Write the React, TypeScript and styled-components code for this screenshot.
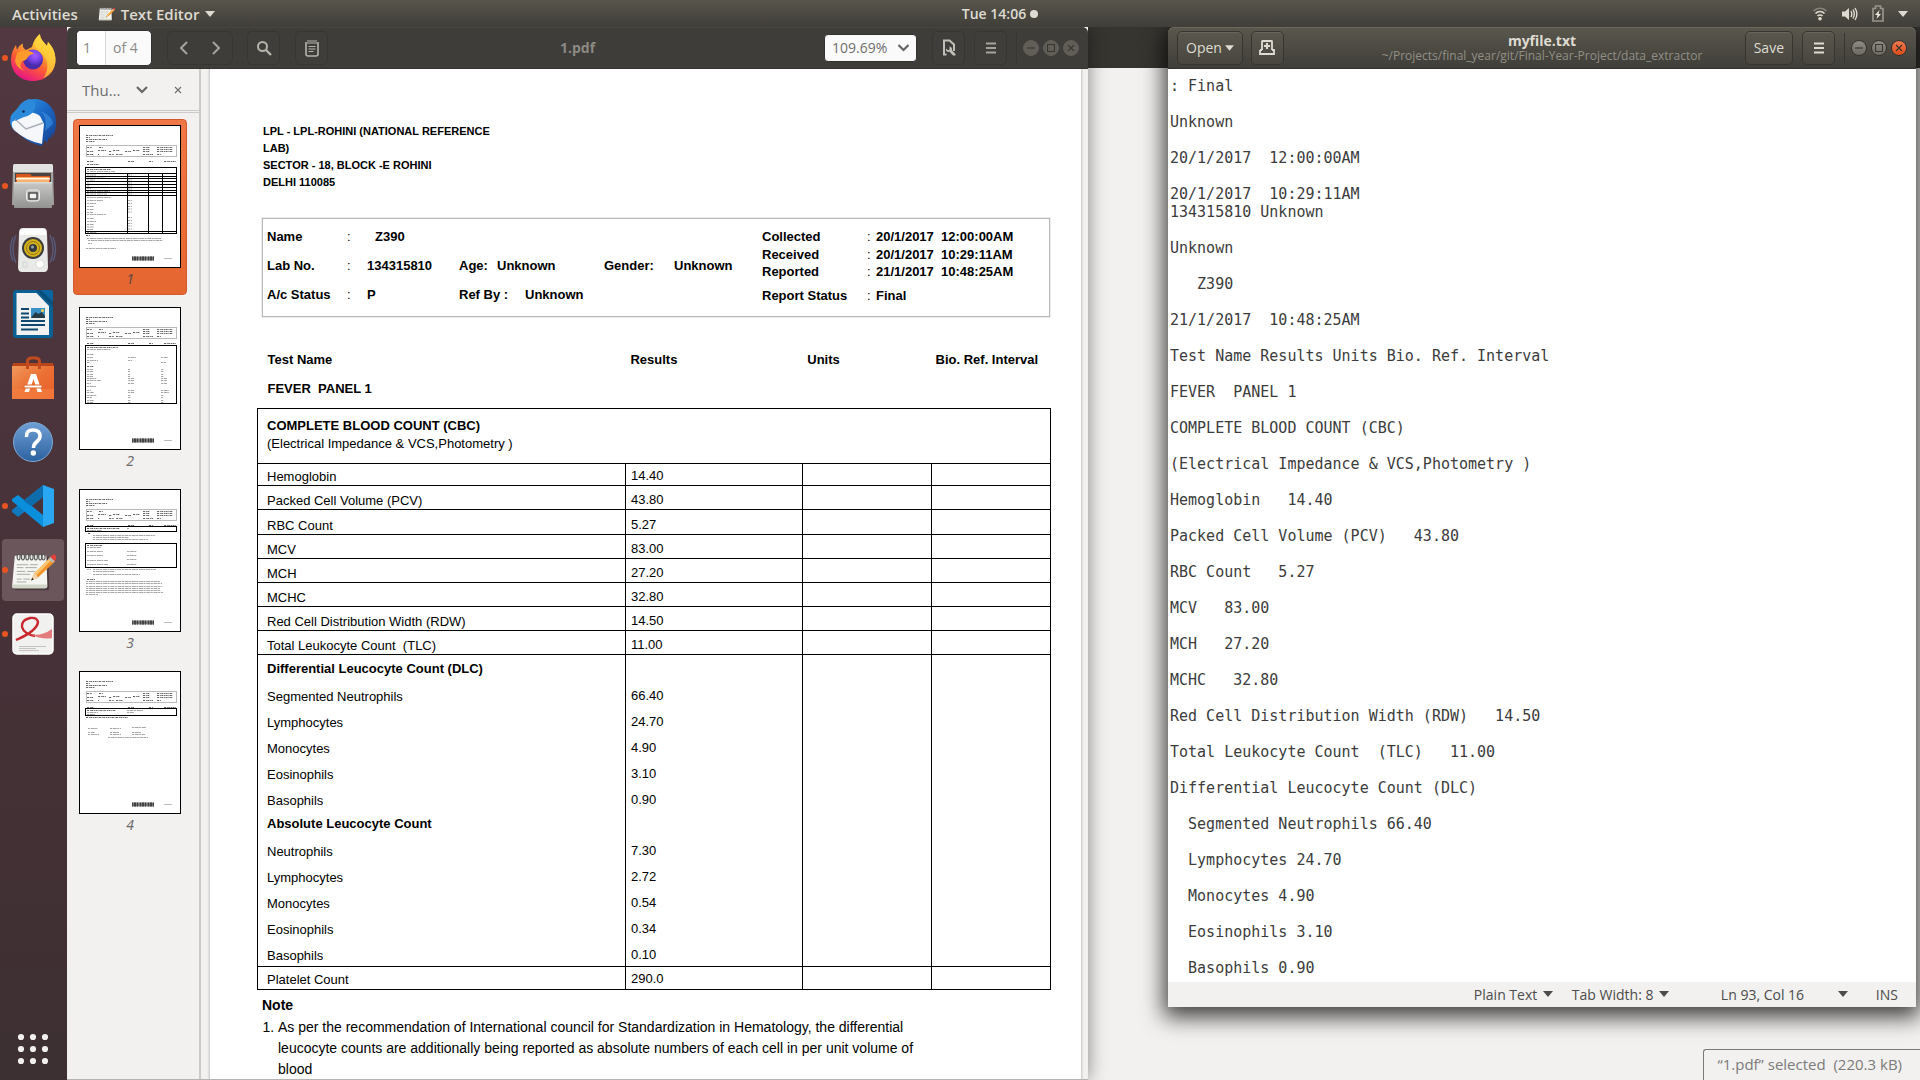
import React from "react";
import styled, { createGlobalStyle, css } from "styled-components";

const ui = `"Open Sans", "Noto Sans", sans-serif`;
const doc = `"Liberation Sans", Arial, sans-serif`;

const GlobalStyle = createGlobalStyle`
  * { box-sizing: border-box; }
  body { margin: 0; font-family: ${ui}; font-size: 14px; overflow: hidden; }
  button, input, select, textarea { font: inherit; color: inherit; margin: 0; }
  button { cursor: pointer; }
  svg { display: block; flex: none; }
`;

/* ---------- shell ---------- */

const Screen = styled.div`
  display: flex;
  flex-direction: column;
  height: 100vh;
  overflow: hidden;
  background: #f2f1ef;
`;

const TopBar = styled.header`
  display: grid;
  grid-template-columns: 1fr auto 1fr;
  align-items: center;
  height: 27px;
  flex: none;
  padding: 0 12px;
  background: linear-gradient(#58554c, #403e39);
  color: #dfdbd2;
`;

const BarGroup = styled.div<{ $end?: boolean }>`
  display: flex;
  align-items: center;
  gap: ${(p) => (p.$end ? 14 : 20)}px;
  justify-content: ${(p) => (p.$end ? "flex-end" : "flex-start")};
`;

const BarButton = styled.button`
  display: flex;
  align-items: center;
  gap: 6px;
  padding: 0;
  border: 0;
  background: none;
  font-size: 15px;
  font-weight: 600;
  line-height: 20px;
`;

const Clock = styled(BarButton)`
  padding-left: 80px;
  gap: 4px;
  font-size: 14px;
`;

const Workspace = styled.div`
  display: flex;
  flex: 1;
  min-height: 0;
`;

const Dock = styled.nav`
  display: flex;
  flex-direction: column;
  gap: 2px;
  width: 67px;
  flex: none;
  background: linear-gradient(#523840, #49333a 45%, #402f33 85%, #3c3032);
`;

const DockItem = styled.button<{ $active?: boolean; $running?: boolean }>`
  position: relative;
  display: grid;
  place-items: center;
  width: 62px;
  height: 62px;
  margin-left: 2px;
  padding: 0;
  border: 0;
  border-radius: 4px;
  background: ${(p) => (p.$active ? "#6b565c" : "none")};
  ${(p) =>
    p.$running &&
    css`
      &::before {
        content: "";
        position: absolute;
        left: 0;
        top: 28px;
        width: 6px;
        height: 6px;
        border-radius: 50%;
        background: #e95420;
      }
    `}
`;

const DockSpacer = styled.div`
  flex: 1;
`;

const Desktop = styled.main`
  position: relative;
  display: flex;
  flex: 1;
  min-width: 0;
  gap: 80px;
  padding-right: 4px;
  background: linear-gradient(#373530 0 41px, #f2f1ef 41px);
  overflow: hidden;
`;

const StatusTip = styled.div`
  position: absolute;
  right: 0;
  bottom: 0;
  height: 31px;
  padding: 4px 18px 4px 13px;
  border: solid #7a7a78;
  border-width: 1px 0 0 1px;
  border-top-left-radius: 3px;
  background: #f2f1ef;
  color: #7b7b79;
  font-size: 15px;
  line-height: 20px;
  white-space: pre;
`;

/* ---------- windows ---------- */

const PdfWindow = styled.section`
  display: flex;
  flex-direction: column;
  flex: 1021 1 0;
  min-width: 0;
  background: #f2f1f0;
  border-bottom: 1px solid #b5b4b2;
  box-shadow: 0 0 18px rgba(0, 0, 0, 0.45);
`;

const EditorWindow = styled.section`
  display: flex;
  flex-direction: column;
  flex: 748 1 0;
  min-width: 0;
  margin-bottom: 73px;
  border-radius: 6px 6px 0 0;
  box-shadow: 0 6px 22px 4px rgba(0, 0, 0, 0.75);
`;

const TitleBar = styled.div<{ $focused?: boolean }>`
  display: grid;
  grid-template-columns: 1fr auto 1fr;
  align-items: center;
  height: 42px;
  flex: none;
  padding: 0 9px;
  border-radius: 6px 6px 0 0;
  border-bottom: 1px solid #35332f;
  background: ${(p) => (p.$focused ? "linear-gradient(#5a574e, #403e39)" : "#3f3d39")};
  box-shadow: inset 0 1px ${(p) => (p.$focused ? "#6a675d" : "#474540")};
  color: ${(p) => (p.$focused ? "#dfdbd2" : "#a5a39b")};
`;

const Tools = styled.div<{ $end?: boolean }>`
  display: flex;
  align-items: center;
  justify-content: ${(p) => (p.$end ? "flex-end" : "flex-start")};
`;

const Title = styled.h1`
  margin: 0;
  color: #8b8981;
  font-size: 14px;
  font-weight: 700;
  line-height: 20px;
`;

const FileTitle = styled.div`
  display: flex;
  flex-direction: column;
  align-items: center;
`;

const FileName = styled.strong`
  color: #dfdbd2;
  font-size: 14px;
  font-weight: 700;
  line-height: 16px;
`;

const FilePath = styled.span`
  color: #918f86;
  font-size: 12px;
  line-height: 14px;
`;

const ToolButton = styled.button<{ $gap?: number; $wide?: boolean; $focused?: boolean }>`
  display: flex;
  align-items: center;
  justify-content: center;
  gap: 3px;
  min-width: 33px;
  height: 34px;
  margin-left: ${(p) => p.$gap ?? 0}px;
  padding: 0 ${(p) => (p.$wide ? 8 : 0)}px;
  border: 1px solid ${(p) => (p.$focused ? "#37352f" : "#383632")};
  border-radius: 5px;
  background: ${(p) => (p.$focused ? "linear-gradient(#5a574e, #48463f)" : "#403e3a")};
  box-shadow: ${(p) => (p.$focused ? "inset 0 1px #68655b" : "none")};
  font-size: 14px;
  white-space: nowrap;
`;

const NavPair = styled.div`
  display: flex;
  height: 34px;
  margin-left: 15px;
  border: 1px solid #383632;
  border-radius: 5px;
`;

const NavButton = styled.button`
  display: grid;
  place-items: center;
  width: 32px;
  padding: 0;
  border: 0;
  background: none;
`;

const PageBox = styled.label`
  display: flex;
  height: 36px;
  border: 1px solid #34322e;
  border-radius: 5px;
  background: #fafafa;
  color: #8a8a88;
  font-size: 14px;
  line-height: 34px;
  overflow: hidden;
`;

const PageInput = styled.input`
  width: 29px;
  padding: 0 0 0 6px;
  border: 0;
  border-right: 1px solid #d6d5d3;
  background: #fff;
  outline: 0;
`;

const PageTotal = styled.span`
  width: 45px;
  padding-left: 7px;
`;

const ZoomWrap = styled.div`
  position: relative;
  height: 28px;
  svg {
    position: absolute;
    right: 7px;
    top: 9px;
    pointer-events: none;
  }
`;

const ZoomSelect = styled.select`
  appearance: none;
  width: 93px;
  height: 28px;
  padding: 0 24px 0 7px;
  border: 1px solid #34322e;
  border-radius: 4px;
  background: #fafafa;
  color: #6f6f6d;
  font-size: 14px;
`;

const Separator = styled.i`
  width: 1px;
  height: 30px;
  margin: 0 2px 0 9px;
  background: #383632;
`;

const WindowButton = styled.button<{ $tone: "dim" | "lit" | "close" }>`
  display: grid;
  place-items: center;
  width: 16px;
  height: 16px;
  margin-left: 4px;
  padding: 0;
  border-radius: 50%;
  border: 1px solid ${(p) => (p.$tone === "dim" ? "#605e57" : "#35332e")};
  background: ${(p) =>
    p.$tone === "dim" ? "#605e57" : p.$tone === "lit" ? "linear-gradient(#8d8b82, #6c6a62)" : "linear-gradient(#f37a50, #de4c1a)"};
  color: #38362f;
`;

/* ---------- pdf viewer ---------- */

const Viewer = styled.div`
  display: flex;
  flex: 1;
  min-height: 0;
`;

const Sidebar = styled.aside`
  display: flex;
  flex-direction: column;
  width: 134px;
  flex: none;
  border-right: 2px solid #cbcac8;
  overflow: hidden;
`;

const SideHeader = styled.div`
  display: flex;
  align-items: center;
  height: 44px;
  flex: none;
  padding: 0 17px 0 15px;
  border-bottom: 3px double #cbcac8;
  color: #6d6d6b;
`;

const SideSelect = styled.button`
  display: flex;
  align-items: center;
  justify-content: space-between;
  width: 66px;
  padding: 0;
  border: 0;
  background: none;
  font-size: 15px;
`;

const SideClose = styled.button`
  margin-left: auto;
  padding: 0;
  border: 0;
  background: none;
`;

const Thumbs = styled.div`
  display: flex;
  flex-direction: column;
  gap: 6px;
  padding: 6px;
`;

const Thumb = styled.button<{ $selected?: boolean }>`
  display: flex;
  flex-direction: column;
  align-items: center;
  width: 114px;
  height: 176px;
  padding: 5px 0 0;
  border: 1px solid ${(p) => (p.$selected ? "#d3592b" : "transparent")};
  border-radius: 4px;
  background: ${(p) => (p.$selected ? "linear-gradient(#f07746, #e5652f)" : "none")};
  color: ${(p) => (p.$selected ? "#5f4a40" : "#6d6d6b")};
  line-height: 22px;
`;

const PageNumber = styled.em`
  font-family: "Noto Sans", sans-serif;
  font-size: 14px;
  font-style: italic;
`;

const Canvas = styled.div`
  flex: 1;
  min-width: 0;
  padding: 0 7px 0 9px;
  overflow: hidden;
`;

const Paper = styled.article`
  height: 100%;
  padding: 54px 30px 0 47px;
  background: #fff;
  box-shadow: 0 0 2px 1px #c4c3c1;
  color: #000;
  font-family: ${doc};
  font-size: 13px;
  overflow: hidden;
`;

const Address = styled.p`
  margin: 0 0 0 6px;
  font-size: 11px;
  font-weight: 700;
  line-height: 17px;
`;

const Info = styled.div`
  display: flex;
  margin: 27px 1px 0 5px;
  height: 99px;
  padding: 9px 0 0 4px;
  border: 1px solid #b9b9b9;
  box-shadow: 0 0 0 1px #ececec;
`;

const InfoSide = styled.div<{ $grow?: boolean }>`
  flex: ${(p) => (p.$grow ? "0 0 495px" : "1")};
`;

const InfoRow = styled.div<{ $h: number }>`
  display: flex;
  align-items: flex-start;
  height: ${(p) => p.$h}px;
  line-height: 18px;
  white-space: pre;
`;

const Cell = styled.span<{ $w?: number; $indent?: number; $thin?: boolean }>`
  width: ${(p) => (p.$w ? p.$w + "px" : "auto")};
  padding-left: ${(p) => p.$indent ?? 0}px;
  font-weight: ${(p) => (p.$thin ? 400 : 700)};
`;

const Results = styled.table`
  width: 100%;
  margin-top: 35px;
  border-collapse: collapse;
  table-layout: fixed;
  line-height: 15px;
`;

const Column = styled.col<{ $share?: number }>`
  width: ${(p) => (p.$share ? p.$share + "%" : "auto")};
`;

const HeadCell = styled.th<{ $indent: number }>`
  height: 29px;
  padding: 0 0 0 ${(p) => p.$indent}px;
  text-align: left;
  vertical-align: top;
  white-space: pre;
`;

const PanelCell = styled.th`
  height: 27px;
  padding: 0 0 0 10px;
  text-align: left;
  vertical-align: top;
  white-space: pre;
`;

const GroupCell = styled.td`
  height: 55px;
  padding: 8px 0 0 9px;
  border: 1px solid #000;
  vertical-align: top;
  line-height: 18px;
`;

const Row = styled.tr<{ $h: number; $rule?: boolean; $pad: number }>`
  height: ${(p) => p.$h}px;
  td, th {
    height: ${(p) => p.$h}px;
    padding: 0 0 ${(p) => p.$pad}px 9px;
    border: solid #000;
    border-width: 0 1px ${(p) => (p.$rule ? 1 : 0)}px;
    text-align: left;
    vertical-align: bottom;
    font-weight: 400;
    white-space: pre;
  }
  td {
    padding: 0 0 ${(p) => p.$pad + 1}px 5px;
  }
`;

const Notes = styled.section`
  margin: 4px 0 0 5px;
  font-size: 14px;
`;

const NoteTitle = styled.h2`
  margin: 0;
  font-size: 14px;
  line-height: 23px;
`;

const NoteList = styled.ol`
  margin: 0;
  padding-left: 16px;
  line-height: 21px;
  white-space: nowrap;
`;

/* ---------- text editor ---------- */

const TextArea = styled.textarea`
  display: block;
  flex: 1;
  width: 100%;
  min-height: 0;
  padding: 8px 2px 0;
  border: 0;
  outline: 0;
  resize: none;
  overflow: hidden;
  background: #fff;
  color: #3c3c3c;
  font-family: "DejaVu Sans Mono", monospace;
  font-size: 15px;
  line-height: 18px;
  white-space: pre;
`;

const StatusBar = styled.footer`
  display: flex;
  align-items: center;
  justify-content: flex-end;
  height: 25px;
  flex: none;
  padding: 0 18px 1px 0;
  background: #f2f1f0;
  color: #4c4c4a;
  font-size: 14px;
`;

const StatusButton = styled.button<{ $w: number; $spread?: boolean }>`
  display: flex;
  align-items: center;
  justify-content: ${(p) => (p.$spread ? "space-between" : "flex-start")};
  gap: 6px;
  width: ${(p) => p.$w}px;
  padding: 0;
  border: 0;
  background: none;
  white-space: nowrap;
`;

const InsertMode = styled.span`
  padding-left: 28px;
`;

/* ---------- small glyphs ---------- */

const Caret = ({ w = 10, h = 6 }: { w?: number; h?: number }) => (
  <svg width={w} height={h} viewBox="0 0 10 6"><path d="M0 0h10L5 6z" fill="currentColor" /></svg>
);
const Chevron = () => (
  <svg width="12" height="10" viewBox="0 0 12 10"><path d="M1 2l5 5 5-5" fill="none" stroke="#666" strokeWidth="2.2" /></svg>
);
const Arrow = ({ back }: { back?: boolean }) => (
  <svg width="10" height="14" viewBox="0 0 10 14"><path d={back ? "M8 1L2 7l6 6" : "M2 1l6 6-6 6"} fill="none" stroke="#a5a39b" strokeWidth="2" /></svg>
);
const Menu = () => (
  <svg width="10" height="12" viewBox="0 0 10 12"><path d="M0 1.5h10M0 6h10M0 10.5h10" stroke="currentColor" strokeWidth="2" /></svg>
);
const Search = () => (
  <svg width="16" height="16" viewBox="0 0 16 16"><circle cx="6.5" cy="6.5" r="4.5" fill="none" stroke="#b5b3aa" strokeWidth="2" /><path d="M10 10l5 5" stroke="#b5b3aa" strokeWidth="2.4" /></svg>
);
const Notepad = () => (
  <svg width="14" height="18" viewBox="0 0 14 18">
    <path d="M1 3v12q0 2 2 2h8q2 0 2-2V3" fill="none" stroke="#b5b3aa" strokeWidth="1.6" />
    <path d="M3 1v4M5 1v4M7 1v4M9 1v4M11 1v4" stroke="#b5b3aa" />
    <path d="M3.5 7.5h7M3.5 10h7M3.5 12.5h5" stroke="#b5b3aa" strokeWidth="1.2" />
  </svg>
);
const PageTool = () => (
  <svg width="14" height="17" viewBox="0 0 14 17">
    <path d="M4.5 15.5H2v-14h5.5l4.5 4V12" fill="none" stroke="#c0beb5" strokeWidth="2" />
    <path d="M4 9.500q-.5 3 2 3.500l1.500-.2L11 16.500h2.500V15L10 11.300q.6-3-2.500-3.800v3l-1.500.8z" fill="#c0beb5" />
  </svg>
);
const NewTab = () => (
  <svg width="16" height="15" viewBox="0 0 16 15">
    <path d="M3 10V1.500q0-.5.5-.5h9q.5 0 .5.500V10M1 10v4h14v-4h-2M3 10H1" fill="none" stroke="#dfdbd2" strokeWidth="1.8" />
    <path d="M8 3v6M5 6h6" stroke="#dfdbd2" strokeWidth="2" />
  </svg>
);
const WinGlyph = ({ kind }: { kind: "min" | "max" | "close" }) => (
  <svg width="8" height="8" viewBox="0 0 8 8">
    <path d={kind === "min" ? "M0 4h8" : kind === "max" ? "M.5.5h7v7h-7z" : "M1 1l6 6M7 1l-6 6"} fill="none" stroke="currentColor" strokeWidth="1.1" />
  </svg>
);
const Wifi = () => (
  <svg width="16" height="15" viewBox="0 0 16 15" fill="none">
    <path d="M1.500 5a9 9 0 0113 0" stroke="#85837b" strokeWidth="1.6" />
    <path d="M3.500 7.500a6 6 0 019 0" stroke="#dfdbd2" strokeWidth="1.6" />
    <path d="M5.500 10a3.500 3.500 0 015 0" stroke="#dfdbd2" strokeWidth="1.6" />
    <circle cx="8" cy="12.7" r="1.8" fill="#dfdbd2" />
  </svg>
);
const Volume = () => (
  <svg width="16" height="14" viewBox="0 0 16 14">
    <path d="M0 4.500h3L7 1v12L3 9.500H0z" fill="#dfdbd2" />
    <path d="M9 4q1.500 3 0 6M11 2.500q2.600 4.500 0 9M13 1q3.800 6 0 12" fill="none" stroke="#dfdbd2" strokeWidth="1.4" />
  </svg>
);
const Battery = () => (
  <svg width="12" height="17" viewBox="0 0 12 17">
    <path d="M1 3.500h2.500V1h5v2.500H11V16H1z" fill="none" stroke="#97958c" strokeWidth="1.7" />
    <path d="M7.500 5L3 10h2.500L4.500 14 9 9H6.500z" fill="#efece4" />
  </svg>
);

/* ---------- launcher icons ---------- */

const Notebook = ({ size }: { size: number }) => (
  <svg width={size} height={size} viewBox="0 0 48 48">
    <path d="M5 10h35l1 33q0 2-2 2H6q-2 0-2-2z" fill="#2a1d20" opacity=".5" />
    <path d="M5 9h33l1 32q0 2-2 2H4q-2 0-1.800-2z" fill="#f4f4f0" />
    <path d="M2.500 39h36v2.500q0 1.500-2 1.500h-32q-2 0-2-1.500z" fill="#cfd6c6" />
    <path d="M7 18.500h12M21 18.500h8M7 21.500h7M16 21.500h12M7 25.500h9M18 25.500h8M7 28.500h14M7 33.500h5M14 33.500h7M7 36.500h10" stroke="#a9a9a5" />
    <g fill="#e8e8e4" stroke="#555" strokeWidth="1.1">
      {[9, 13.5, 18, 22.5, 27, 31.5, 35].map((x) => <ellipse key={x} cx={x} cy="10.5" rx="1.6" ry="3" />)}
    </g>
    <path d="M22 35l3-7 17-17 5 4-18 17z" fill="#f2942c" />
    <path d="M25 28l17-17 2 1.700L27 30z" fill="#ffc670" />
    <path d="M22 35l3-7q3 .5 4 4z" fill="#f0d6ae" />
    <path d="M22 35l1.200-2.800 1.600 1.600z" fill="#222" />
    <path d="M40 12.500l2.500-2.500 4.500 4-2.500 2.500z" fill="#b9b9b9" />
    <path d="M42 10.500q3-4 5.500-2t-1 6z" fill="#e2403b" />
  </svg>
);

const Firefox = () => (
  <svg width="48" height="48" viewBox="0 0 48 48">
    <defs>
      <linearGradient id="fx" x1=".8" y1="0" x2=".3" y2="1"><stop offset="0" stopColor="#fff44f" /><stop offset=".35" stopColor="#ffb02e" /><stop offset=".65" stopColor="#ff5a36" /><stop offset="1" stopColor="#e3128a" /></linearGradient>
      <radialGradient id="fp" cx=".6" cy=".3"><stop offset="0" stopColor="#a75cff" /><stop offset=".6" stopColor="#7542e5" /><stop offset="1" stopColor="#4a2ba8" /></radialGradient>
    </defs>
    <path d="M24 47C11 47 2 38 2 26c0-6 2-11 5-15l1 5q2-5 6-6.500c-1 3 .5 5 3 6.500l6-3Q25 4 31 0c0 5 4 8 7 12l1-4c5 5 7.500 11 7.500 18C46.500 38 37 47 24 47z" fill="url(#fx)" />
    <path d="M31 0c0 5 4 8 7 12l1-4c5 5 7.500 11 7.500 18 0 8-5 15-12 18 5-7 5-16 1-21-3-5-11-9-10-14z" fill="#ffd53d" opacity=".7" />
    <circle cx="24" cy="25.5" r="10" fill="url(#fp)" />
    <path d="M8 19q6-4 12-2 4 1 5 3-4 0-6 3-2 4-6 4-4 6 3 10-9-3-10-10z" fill="#ff9b2a" />
  </svg>
);

const Thunderbird = () => (
  <svg width="48" height="50" viewBox="0 0 48 50">
    <defs><linearGradient id="tb" x1="0" y1="0" x2="1" y2="1"><stop offset="0" stopColor="#35a8f0" /><stop offset=".5" stopColor="#1b67c4" /><stop offset="1" stopColor="#173f8c" /></linearGradient></defs>
    <path d="M8 12Q14 2 25 2c13 0 22 10 22 23 0 6-1 10-3 14l-1-3-1 6-2-2-2 6-2-3-3 6q-14-3-23-12Q1 32 1 24q0-4 2-7z" fill="url(#tb)" />
    <path d="M3 25l14-9q8-2 14 3l4 8-2 20q-16-3-28-14Q2 29 3 25z" fill="#f5f7fb" />
    <path d="M6 22l11 10 17-6" fill="none" stroke="#a9afba" strokeWidth="1.4" />
    <path d="M8 17Q9 5 20 2q8 1 6 9-3 8-11 9l-9 4z" fill="#2b8ada" />
    <circle cx="14.5" cy="14.5" r="1.3" fill="#11285c" />
    <path d="M31 14q8 6 5 20l8-7Q44 19 31 14z" fill="#3b95e8" opacity=".6" />
  </svg>
);

const Files = () => (
  <svg width="44" height="46" viewBox="0 0 44 46">
    <defs><linearGradient id="fl" x1="0" y1="0" x2="0" y2="1"><stop offset="0" stopColor="#c9c9c8" /><stop offset="1" stopColor="#929291" /></linearGradient></defs>
    <path d="M4 1h36q2 0 2 2l1 39H1L2 3q0-2 2-2z" fill="#a3a3a1" />
    <path d="M4 1h36q2 0 2 2v6H2V3q0-2 2-2z" fill="#e2e2e0" />
    <path d="M4 10h36v9H4z" fill="#4d4440" />
    <path d="M5 11h14l2 2h18v6H5z" fill="#d9561f" />
    <path d="M6 14h32v5H6z" fill="#f7b26e" /><path d="M5 15h34v1.500H5z" fill="#fff3e2" />
    <path d="M3 19h38v25q0 1-1 1H4q-1 0-1-1z" fill="url(#fl)" />
    <path d="M3 19h38v1.500H3z" fill="#d9d9d8" />
    <rect x="15.5" y="27" width="13" height="11" rx="2.5" fill="#bdbdbc" stroke="#eee" />
    <rect x="18" y="30" width="8" height="6" fill="#f2f2f2" stroke="#444" strokeWidth="1.4" />
  </svg>
);

const Rhythmbox = () => (
  <svg width="48" height="46" viewBox="0 0 48 46">
    <g fill="none" stroke="#5a6d96" strokeWidth="1.5" opacity=".65">
      <path d="M7 8q-6 14 0 28M4 10q-5 12 0 24M41 8q6 14 0 28M44 10q5 12 0 24" />
    </g>
    <path d="M14 1h20q4 0 4 5l1 34q0 5-4 5H13q-4 0-4-5l1-34q0-5 4-5z" fill="#e9e9e7" />
    <path d="M14 2h20q3 0 3 4v2H11V6q0-4 3-4z" fill="#fff" />
    <circle cx="24" cy="21" r="11" fill="#3a3d3c" />
    <circle cx="24" cy="21" r="9" fill="#d6b21c" />
    <circle cx="24" cy="21" r="6.5" fill="none" stroke="#8f7510" />
    <circle cx="24" cy="21" r="4" fill="#33383c" /><circle cx="23.5" cy="20" r="1.5" fill="#9aa5ae" />
    <circle cx="31" cy="37" r="4" fill="#fff" stroke="#ccc" strokeWidth=".6" />
    <path d="M14 35h4v5h-4z" fill="none" stroke="#d2d2d0" />
  </svg>
);

const Writer = () => (
  <svg width="40" height="48" viewBox="0 0 40 48">
    <path d="M3 0h23l14 14v31q0 3-3 3H3q-3 0-3-3V3q0-3 3-3z" fill="#0a5f93" />
    <path d="M3.500 3h20L36 16v29H3.500z" fill="#f1f1f1" />
    <path d="M23 0l17 17V11L29 0z" fill="#0a4f7c" /><path d="M28 0h10q2 0 2 2v10z" fill="#0b65a0" />
    <path d="M8 19h8M8 23.500h8M8 27.500h8M8 31h24M8 35h24M8 39.500h17" stroke="#11486f" strokeWidth="2" />
    <rect x="18" y="18" width="14" height="10" fill="#3b92c6" /><path d="M18.500 27l4-5 3 2 3-2 3.500 4v2H18.500z" fill="#273b47" /><circle cx="29.5" cy="20.5" r="1.5" fill="#f5d04e" />
  </svg>
);

const Software = () => (
  <svg width="42" height="44" viewBox="0 0 42 44">
    <defs><linearGradient id="sw" x1="0" y1="0" x2="1" y2="1"><stop offset="0" stopColor="#f0995c" /><stop offset=".5" stopColor="#ec6f33" /><stop offset="1" stopColor="#e8602a" /></linearGradient></defs>
    <path d="M1 7h40l1 4H0z" fill="#b8441a" />
    <path d="M0 10h42v33H0z" fill="url(#sw)" />
    <path d="M0 33h42v10H0z" fill="#f68242" opacity=".6" />
    <path d="M15.500 13V6q0-4 4-4h4q4 0 4 4v7" fill="none" stroke="#c24a1e" strokeWidth="3" />
    <path d="M19 18h5l6 18h-4.500L21.500 23 17 36h-4.500z" fill="#fff" />
    <path d="M12 29h18v3H12z" fill="#fff" stroke="#e46028" strokeWidth="1" />
  </svg>
);

const Help = () => (
  <svg width="42" height="42" viewBox="0 0 42 42">
    <defs><linearGradient id="hp" x1="0" y1="0" x2="0" y2="1"><stop offset="0" stopColor="#6f9fd4" /><stop offset="1" stopColor="#2c62a0" /></linearGradient></defs>
    <circle cx="21" cy="21" r="19.5" fill="url(#hp)" stroke="#7ea8d6" />
    <path d="M14.500 16q-.5-7 6.500-7t7 6q0 3.500-3.500 6-3 2.500-3 6" fill="none" stroke="#fff" strokeWidth="3.6" />
    <circle cx="21.3" cy="32" r="2.7" fill="#fff" />
  </svg>
);

const Code = () => (
  <svg width="42" height="42" viewBox="0 0 42 42">
    <path d="M31 0l11 4v34l-11 4z" fill="#2aa7f2" />
    <path d="M31 0v12L6 32l-6-5v-2z" fill="#1178bd" />
    <path d="M31 42V30L6 10l-6 4v2z" fill="#0a8fdc" />
    <path d="M31 0v12L19 21l-7-5z" fill="#0f6cab" />
  </svg>
);

const Evince = () => (
  <svg width="42" height="42" viewBox="0 0 42 42">
    <rect x="1" y="1" width="40" height="40" rx="4" fill="#f1f1ef" stroke="#fff" strokeWidth="1.5" />
    <path d="M7 33.500h27M7 35.500h17M7 37.500h20" stroke="#c4c4c2" />
    <path d="M4 27Q25 18 26 9 25 4 18 5q-9 2-8 9 2 7 13 9" fill="none" stroke="#c8272d" strokeWidth="2.4" />
    <path d="M17 21q12 3 23-5v9q-9 2-23-4z" fill="#e0666a" opacity=".85" />
  </svg>
);

const AppGrid = () => (
  <svg width="32" height="32" viewBox="0 0 32 32" fill="#f2f0ee">
    {[4, 16, 28].map((y) => [4, 16, 28].map((x) => <circle key={x + "-" + y} cx={x} cy={y} r="3.1" />))}
  </svg>
);

const launchers: { name: string; icon: React.ReactNode; running?: boolean; active?: boolean }[] = [
  { name: "Firefox", icon: <Firefox />, running: true },
  { name: "Thunderbird", icon: <Thunderbird /> },
  { name: "Files", icon: <Files />, running: true },
  { name: "Rhythmbox", icon: <Rhythmbox /> },
  { name: "LibreOffice Writer", icon: <Writer /> },
  { name: "Ubuntu Software", icon: <Software /> },
  { name: "Help", icon: <Help /> },
  { name: "Visual Studio Code", icon: <Code />, running: true },
  { name: "Text Editor", icon: <Notebook size={46} />, running: true, active: true },
  { name: "Document Viewer", icon: <Evince />, running: true },
];

/* ---------- page thumbnails ---------- */

// One run of greeked text: [x, y, width, weight]
type Run = [number, number, number, number?];

const common: Run[] = [
  [7, 10.5, 27, 1], [7, 12.5, 4, 1], [7, 14.5, 21, 1], [7, 16.5, 9, 1],
  [8, 22.5, 5, 1], [20, 22.5, 4, 1], [64, 22.5, 7, 1], [78, 22.5, 16, 1],
  [8, 26.5, 6, 1], [19, 25.5, 8, 1], [30, 26.5, 3, 1], [34, 25.5, 7, 1], [46, 26.5, 6, 1], [54, 25.5, 7, 1],
  [64, 24.5, 7, 1], [78, 24.5, 16, 1], [64, 26.5, 7, 1], [78, 26.5, 16, 1],
  [8, 29.5, 7, 1], [19, 29.5, 1, 1], [30, 29.5, 5, 1], [37, 29.5, 7, 1], [64, 29.5, 10, 1], [78, 29.5, 4, 1],
  [8, 36.5, 7, 1], [49, 36.5, 6, 1], [70, 36.5, 4, 1], [85, 36.5, 12, 1],
];

const pages: { runs: Run[]; boxes: [number, number][]; rules?: number[] }[] = [
  {
    boxes: [[42.5, 108.5]],
    rules: [48.5, 51.5, 53.5, 56.5, 59.5, 62.5, 65.5, 67.5, 70.5, 106.5],
    runs: [
      [8, 39.5, 12, 1], [8, 44.5, 24, 1], [8, 46.5, 28],
      ...[50, 52, 55, 58, 61, 63.5, 66.5, 69].map((y, i): Run => [8, y, [9, 18, 8, 3, 3, 4, 23, 20][i]]),
      ...[50, 55, 58, 61, 64, 67, 69].map((y): Run => [49, y, 4]),
      ...[72.5, 75.5, 78.5, 81.5, 84.5, 87.5, 89.5, 93.5, 96.5, 99.5, 102, 104.5, 107.5].map((y, i): Run => [8, y, [24, 16, 9, 7, 7, 6, 19, 7, 9, 7, 7, 6, 10][i]]),
      ...[75.5, 78.5, 81.5, 84, 87, 92.5, 95.5, 98.5, 101, 104].map((y): Run => [49, y, 4]),
      [7, 110.5, 4, 1], [8, 113.5, 75], [9, 115.5, 75], [9, 118.5, 4], [7, 123.5, 30],
    ],
  },
  {
    boxes: [[38.5, 96.5]],
    runs: [
      [8, 40.5, 31, 1], [8, 42.5, 24], [8, 47.5, 7], [8, 50.5, 6], [49, 50.5, 8], [82, 50.5, 7], [8, 53.5, 11], [49, 53.5, 4], [8, 55.5, 3], [82, 55.5, 5], [8, 59.5, 7, 1],
      ...[62.5, 64.5, 67.5, 69.5, 71.5, 73.5, 76.5].flatMap((y, i): Run[] => [[8, y, [6, 6, 6, 6, 10, 14, 4][i]], [49, y, i > 3 ? 6 : 2], [82, y, i > 3 ? 6 : 3]]),
      [8, 79.5, 9],
      ...[83.5, 85.5, 88.5, 90.5, 93.5, 95.5].flatMap((y, i): Run[] => [[8, y, [4, 7, 10, 5, 7, 6][i]], [49, y, i < 2 ? 6 : 3], [82, y, i < 2 ? 8 : 3]]),
    ],
  },
  {
    boxes: [[37.5, 42.5], [54.5, 78.5]],
    runs: [
      [8, 39.5, 33, 1], [8, 41.5, 15], [48, 39.5, 2], [9, 44.5, 3, 1], [14, 46.5, 62], [14, 48.5, 36], [14, 50.5, 55],
      [8, 56.5, 15, 1], [8, 58.5, 14], [8, 62.5, 16], [48, 62.5, 10], [8, 66.5, 16], [48, 66.5, 10], [8, 71.5, 21], [48, 70.5, 10], [8, 75.5, 21], [48, 75.5, 10],
      [8, 80.5, 4], [14, 80.5, 63], [14, 82.5, 22], [14, 85.5, 47], [8, 90.5, 8, 1],
      [7, 92.5, 74], [7, 94.5, 76], [7, 97.5, 76], [7, 99.5, 74], [7, 101.5, 75], [7, 103.5, 77], [7, 105.5, 12],
    ],
  },
  {
    boxes: [[37.5, 44.5]],
    runs: [
      [8, 39.5, 29, 1], [48, 39.5, 16], [8, 41.5, 11], [48, 41.5, 7], [8, 43.5, 8], [7, 46.5, 42, 1],
      [9, 57.5, 10], [31, 57.5, 11], [53, 56.5, 14], [9, 61.5, 7], [31, 61.5, 9], [53, 61.5, 9], [9, 63.5, 11], [31, 63.5, 11], [53, 63.5, 13], [29, 66.5, 40],
    ],
  },
];

const MiniPage = ({ page }: { page: (typeof pages)[number] }) => (
  <svg width="102" height="143" viewBox="0 0 102 143">
    <rect x=".5" y=".5" width="101" height="142" fill="#fff" stroke="#000" />
    <rect x="7.5" y="20.5" width="90" height="11" fill="none" stroke="#bbb" />
    {[...common, ...page.runs].map(([x, y, w, bold], i) => (
      <path key={i} d={`M${x} ${y}h${w}`} stroke={bold ? "#666" : "#a8a8a8"} strokeDasharray={bold ? "2 .8 1 .5" : "2 .7 4 .5"} />
    ))}
    {page.boxes.map(([a, b]) => <rect key={a} x="6.5" y={a} width="91" height={b - a} fill="none" stroke="#000" />)}
    {page.rules && (
      <>
        {page.rules.map((y) => <path key={y} d={`M6 ${y}h92`} stroke="#000" />)}
        <path d="M48.500 48v61M69.500 48v61M83.500 48v61" stroke="#000" />
      </>
    )}
    <path d="M53 133.500h22" stroke="#777" strokeWidth="4" /><path d="M53 133.500h22" stroke="#444" strokeWidth="4" strokeDasharray="1 1 2 1 1 2" />
    <path d="M85 133.500h8" stroke="#bbb" />
  </svg>
);

/* ---------- report data ---------- */

const counts: [string, string, number][] = [
  ["Hemoglobin", "14.40", 22],
  ["Packed Cell Volume (PCV)", "43.80", 24],
  ["RBC Count", "5.27", 25],
  ["MCV", "83.00", 24],
  ["MCH", "27.20", 24],
  ["MCHC", "32.80", 24],
  ["Red Cell Distribution Width (RDW)", "14.50", 24],
  ["Total Leukocyte Count  (TLC)", "11.00", 24],
];

const groups: { title: string; h: number; rows: [string, string][] }[] = [
  {
    title: "Differential Leucocyte Count (DLC)",
    h: 27,
    rows: [["Segmented Neutrophils", "66.40"], ["Lymphocytes", "24.70"], ["Monocytes", "4.90"], ["Eosinophils", "3.10"], ["Basophils", "0.90"]],
  },
  {
    title: "Absolute Leucocyte Count",
    h: 25,
    rows: [["Neutrophils", "7.30"], ["Lymphocytes", "2.72"], ["Monocytes", "0.54"], ["Eosinophils", "0.34"], ["Basophils", "0.10"]],
  },
];

const fileText = [
  ": Final", "Unknown", "20/1/2017  12:00:00AM", "20/1/2017  10:29:11AM\n134315810 Unknown", "Unknown", "   Z390",
  "21/1/2017  10:48:25AM", "Test Name Results Units Bio. Ref. Interval", "FEVER  PANEL 1", "COMPLETE BLOOD COUNT (CBC)",
  "(Electrical Impedance & VCS,Photometry )", "Hemoglobin   14.40", "Packed Cell Volume (PCV)   43.80", "RBC Count   5.27",
  "MCV   83.00", "MCH   27.20", "MCHC   32.80", "Red Cell Distribution Width (RDW)   14.50", "Total Leukocyte Count  (TLC)   11.00",
  "Differential Leucocyte Count (DLC)", "  Segmented Neutrophils 66.40", "  Lymphocytes 24.70", "  Monocytes 4.90",
  "  Eosinophils 3.10", "  Basophils 0.90",
].join("\n\n");

const WindowButtons = ({ focused }: { focused?: boolean }) => (
  <>
    <WindowButton $tone={focused ? "lit" : "dim"} aria-label="Minimize"><WinGlyph kind="min" /></WindowButton>
    <WindowButton $tone={focused ? "lit" : "dim"} aria-label="Maximize"><WinGlyph kind="max" /></WindowButton>
    <WindowButton $tone={focused ? "close" : "dim"} aria-label="Close"><WinGlyph kind="close" /></WindowButton>
  </>
);

const Report = () => (
  <Paper>
    <Address>
      LPL - LPL-ROHINI (NATIONAL REFERENCE<br />LAB)<br />SECTOR - 18, BLOCK -E ROHINI<br />DELHI 110085
    </Address>
    <Info>
      <InfoSide $grow>
        <InfoRow $h={29}>
          <Cell $w={80}>Name</Cell><Cell $w={20} $thin>:</Cell><Cell $indent={8}>Z390</Cell>
        </InfoRow>
        <InfoRow $h={29}>
          <Cell $w={80}>Lab No.</Cell><Cell $w={20} $thin>:</Cell><Cell $w={92}>134315810</Cell>
          <Cell $w={38}>Age:</Cell><Cell $w={107}>Unknown</Cell><Cell $w={70}>Gender:</Cell><Cell>Unknown</Cell>
        </InfoRow>
        <InfoRow $h={29}>
          <Cell $w={80}>A/c Status</Cell><Cell $w={20} $thin>:</Cell><Cell $w={92}>P</Cell>
          <Cell $w={66}>Ref By :</Cell><Cell>Unknown</Cell>
        </InfoRow>
      </InfoSide>
      <InfoSide>
        <InfoRow $h={18}><Cell $w={105}>Collected</Cell><Cell $w={9} $thin>:</Cell><Cell>20/1/2017  12:00:00AM</Cell></InfoRow>
        <InfoRow $h={17}><Cell $w={105}>Received</Cell><Cell $w={9} $thin>:</Cell><Cell>20/1/2017  10:29:11AM</Cell></InfoRow>
        <InfoRow $h={24}><Cell $w={105}>Reported</Cell><Cell $w={9} $thin>:</Cell><Cell>21/1/2017  10:48:25AM</Cell></InfoRow>
        <InfoRow $h={24}><Cell $w={105}>Report Status</Cell><Cell $w={9} $thin>:</Cell><Cell>Final</Cell></InfoRow>
      </InfoSide>
    </Info>

    <Results>
      <colgroup>
        <Column $share={46.4} /><Column $share={22.3} /><Column $share={16.3} /><Column />
      </colgroup>
      <thead>
        <tr>
          <HeadCell $indent={10}>Test Name</HeadCell><HeadCell $indent={5}>Results</HeadCell>
          <HeadCell $indent={5}>Units</HeadCell><HeadCell $indent={4}>Bio. Ref. Interval</HeadCell>
        </tr>
      </thead>
      <tbody>
        <tr><PanelCell colSpan={4}>FEVER  PANEL 1</PanelCell></tr>
        <tr><GroupCell colSpan={4}><b>COMPLETE BLOOD COUNT (CBC)</b><br />(Electrical Impedance &amp; VCS,Photometry )</GroupCell></tr>
        {counts.map(([name, value, h]) => (
          <Row key={name} $h={h} $rule $pad={1}><th scope="row">{name}</th><td>{value}</td><td /><td /></Row>
        ))}
        {groups.map((g, gi) => (
          <React.Fragment key={g.title}>
            <Row $h={g.h} $pad={5}><th scope="row"><b>{g.title}</b></th><td /><td /><td /></Row>
            {g.rows.map(([name, value], i) => (
              <Row key={name} $h={26} $pad={3} $rule={gi === 1 && i === 4}><th scope="row">{name}</th><td>{value}</td><td /><td /></Row>
            ))}
          </React.Fragment>
        ))}
        <Row $h={23} $rule $pad={2}><th scope="row">Platelet Count</th><td>290.0</td><td /><td /></Row>
      </tbody>
    </Results>

    <Notes>
      <NoteTitle>Note</NoteTitle>
      <NoteList>
        <li>
          As per the recommendation of International council for Standardization in Hematology, the differential<br />
          leucocyte counts are additionally being reported as absolute numbers of each cell in per unit volume of<br />
          blood
        </li>
      </NoteList>
    </Notes>
  </Paper>
);

export default function App() {
  return (
    <Screen>
      <GlobalStyle />
      <TopBar>
        <BarGroup>
          <BarButton>Activities</BarButton>
          <BarButton><Notebook size={17} />Text Editor <Caret /></BarButton>
        </BarGroup>
        <Clock>Tue 14:06 <svg width="8" height="8" viewBox="0 0 8 8"><circle cx="4" cy="4" r="4" fill="#dfdbd2" /></svg></Clock>
        <BarGroup $end><Wifi /><Volume /><Battery /><Caret /></BarGroup>
      </TopBar>

      <Workspace>
        <Dock aria-label="Dock">
          {launchers.map((l) => (
            <DockItem key={l.name} aria-label={l.name} $running={l.running} $active={l.active}>{l.icon}</DockItem>
          ))}
          <DockSpacer />
          <DockItem aria-label="Show Applications"><AppGrid /></DockItem>
        </Dock>

        <Desktop>
          <PdfWindow>
            <TitleBar>
              <Tools>
                <PageBox><PageInput aria-label="Page" defaultValue="1" /><PageTotal>of 4</PageTotal></PageBox>
                <NavPair>
                  <NavButton aria-label="Previous page"><Arrow back /></NavButton>
                  <NavButton aria-label="Next page"><Arrow /></NavButton>
                </NavPair>
                <ToolButton $gap={14} aria-label="Find"><Search /></ToolButton>
                <ToolButton $gap={15} aria-label="Annotate"><Notepad /></ToolButton>
              </Tools>
              <Title>1.pdf</Title>
              <Tools $end>
                <ZoomWrap>
                  <ZoomSelect aria-label="Zoom"><option>109.69%</option></ZoomSelect>
                  <svg width="13" height="10" viewBox="0 0 12 10"><path d="M1 2l5 5 5-5" fill="none" stroke="#666" strokeWidth="2.2" /></svg>
                </ZoomWrap>
                <ToolButton $gap={15} aria-label="Page tools"><PageTool /></ToolButton>
                <ToolButton $gap={9} aria-label="Menu"><Menu /></ToolButton>
                <Separator />
                <WindowButtons />
              </Tools>
            </TitleBar>
            <Viewer>
              <Sidebar>
                <SideHeader>
                  <SideSelect>Thu… <Chevron /></SideSelect>
                  <SideClose aria-label="Close side pane"><WinGlyph kind="close" /></SideClose>
                </SideHeader>
                <Thumbs>
                  {pages.map((p, i) => (
                    <Thumb key={i} $selected={i === 0}><MiniPage page={p} /><PageNumber>{i + 1}</PageNumber></Thumb>
                  ))}
                </Thumbs>
              </Sidebar>
              <Canvas><Report /></Canvas>
            </Viewer>
          </PdfWindow>

          <EditorWindow>
            <TitleBar $focused>
              <Tools>
                <ToolButton $focused $wide>Open <Caret w={9} /></ToolButton>
                <ToolButton $focused $gap={8} aria-label="New document"><NewTab /></ToolButton>
              </Tools>
              <FileTitle>
                <FileName>myfile.txt</FileName>
                <FilePath>~/Projects/final_year/git/Final-Year-Project/data_extractor</FilePath>
              </FileTitle>
              <Tools $end>
                <ToolButton $focused $wide>Save</ToolButton>
                <ToolButton $focused $gap={9} aria-label="Menu"><Menu /></ToolButton>
                <Separator />
                <WindowButtons focused />
              </Tools>
            </TitleBar>
            <TextArea aria-label="myfile.txt" defaultValue={fileText} spellCheck={false} />
            <StatusBar>
              <StatusButton $w={98}>Plain Text <Caret /></StatusButton>
              <StatusButton $w={149}>Tab Width: 8 <Caret /></StatusButton>
              <StatusButton $w={127} $spread>Ln 93, Col 16 <Caret /></StatusButton>
              <InsertMode>INS</InsertMode>
            </StatusBar>
          </EditorWindow>

          <StatusTip>“1.pdf” selected  (220.3 kB)</StatusTip>
        </Desktop>
      </Workspace>
    </Screen>
  );
}
